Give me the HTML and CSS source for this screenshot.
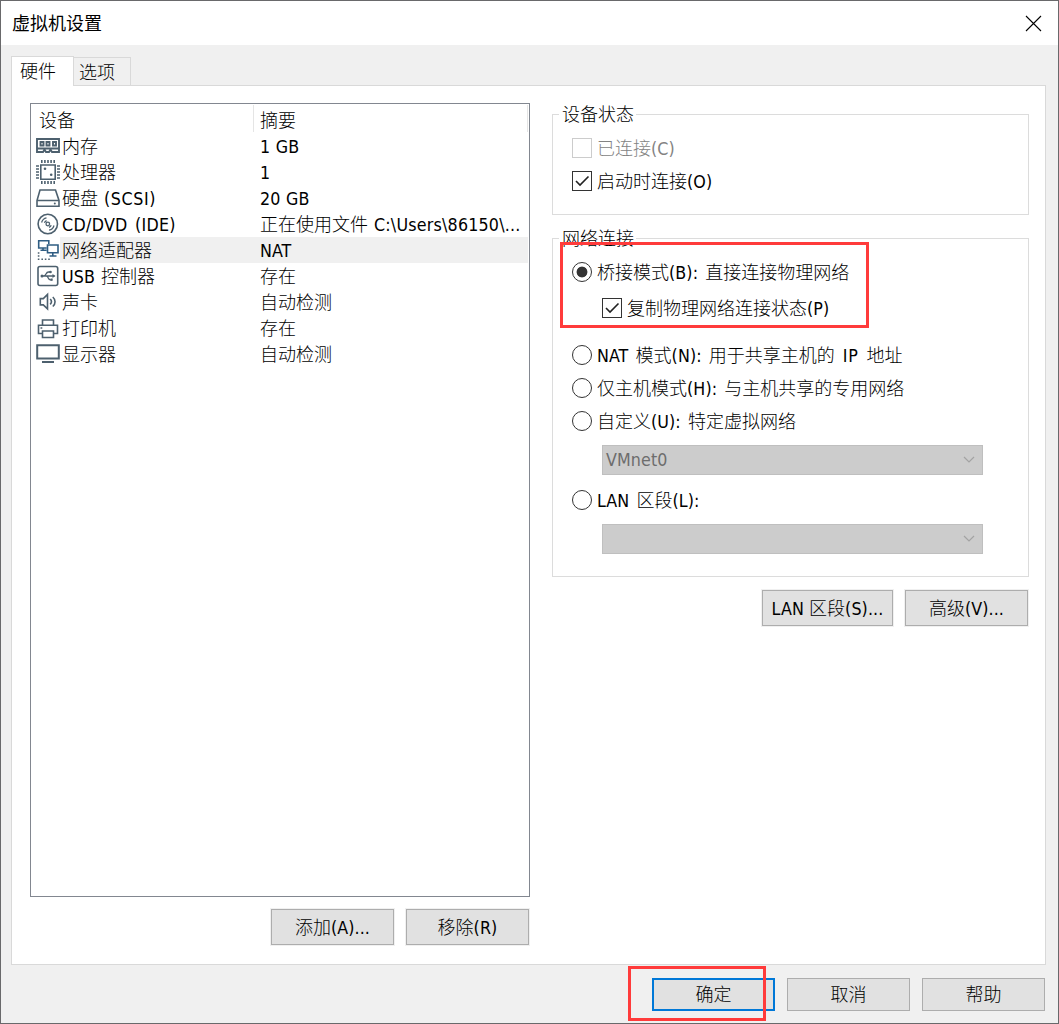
FILE: index.html
```html
<!DOCTYPE html>
<html lang="zh-CN">
<head>
<meta charset="utf-8">
<title>虚拟机设置</title>
<link rel="stylesheet" href="styles.css">
</head>
<body>
<div class="window">
  <header class="titlebar">
    <h1 class="title">虚拟机设置</h1>
    <svg class="close" width="17" height="17" viewBox="0 0 17 17"><path d="M1 1L16 16M16 1L1 16"/></svg>
  </header>
  <nav class="tabs">
    <div class="tab tab-active">硬件</div>
    <div class="tab">选项</div>
  </nav>
  <main class="panel">
    <section class="left">
      <div class="list">
        <div class="head"><span class="head-name">设备</span><span class="head-sum">摘要</span></div>
        <div class="row">
          <svg class="icon" viewBox="0 0 25 26"><path class="mem" d="M2 6H24V19H17L16 17.5H15L14 19H11L10 17.5H9L8 19H2ZM2 15.5H24M5.5 9H8.5V12.5H5.5ZM11.5 9H14.5V12.5H11.5ZM18 9H21V12.5H18Z"/></svg>
          <span class="name">内存</span><span class="sum"><i class="lt">1 GB</i></span>
        </div>
        <div class="row">
          <svg class="icon" viewBox="0 0 25 26"><path d="M5.8 6H20.2V20.2H5.8ZM6.8 1V4M9.9 1V4M13 1V4M16.1 1V4M19.2 1V4M6.8 22V25M9.9 22V25M13 22V25M16.1 22V25M19.2 22V25M1 7H4M1 10H4M1 13H4M1 16H4M1 19H4M22 7H25M22 10H25M22 13H25M22 16H25M22 19H25"/><circle class="fill" cx="10" cy="9.7" r="1.3"/><circle class="fill" cx="16.2" cy="15.8" r="1.3"/></svg>
          <span class="name">处理器</span><span class="sum"><i class="lt">1</i></span>
        </div>
        <div class="row">
          <svg class="icon" viewBox="0 0 25 26"><path d="M5 5H20.5L24 15.5V21.3H2V15.5ZM2 15.5H24"/><circle class="fill" cx="19.8" cy="18.5" r="1"/></svg>
          <span class="name">硬盘 <i class="lt scsi">(SCSI)</i></span><span class="sum"><i class="lt">20 GB</i></span>
        </div>
        <div class="row">
          <svg class="icon" viewBox="0 0 25 26"><circle cx="12.8" cy="13" r="9.7"/><circle class="thin" cx="12.8" cy="13" r="1.8"/><path class="thin" d="M6.6 11.5C7.3 9 9.2 7.2 11.5 6.8M9.4 11.8C9.8 10.8 10.6 10 11.6 9.6M19 14.5C18.3 17 16.4 18.8 14.1 19.2M16.2 14.2C15.8 15.2 15 16 14 16.4"/></svg>
          <span class="name"><i class="lt cd">CD/DVD (IDE)</i></span><span class="sum">正在使用文件 <i class="lt path">C:\Users\86150\...</i></span>
        </div>
        <div class="row row-selected">
          <svg class="icon icon-net" viewBox="0 0 25 26"><path d="M11.5 11H3.7V3.7H13.8V7M5.5 13.2H11.5M8 11V13M12.5 8H23V15.8H12.5ZM17.8 16V18.5M14.5 19H21.5"/><path class="dots" d="M2.8 16H4.4M2.8 19H4.4M2.8 22.3H4.4M6.4 22.3H8M9.8 22.3H11.4M13.2 22.3H14.8"/></svg>
          <span class="name">网络适配器</span><span class="sum"><i class="lt">NAT</i></span>
        </div>
        <div class="row">
          <svg class="icon" viewBox="0 0 25 26"><rect x="3" y="3.5" width="19.7" height="19" rx="2"/><path class="thin" d="M6.5 13H19.5M8.5 13C11.5 13 10.5 9 13.5 9H15M11 13C14 13 12.5 16.8 15.5 16.8H17"/><circle class="fill" cx="7" cy="13" r="1.5"/><circle class="fill" cx="15.5" cy="9" r="1.3"/><path class="fill" d="M17.5 11L20.5 13L17.5 15ZM15.5 15.6H17.7V17.8H15.5Z"/></svg>
          <span class="name"><i class="lt">USB</i> 控制器</span><span class="sum">存在</span>
        </div>
        <div class="row">
          <svg class="icon" viewBox="0 0 25 26"><path d="M5.3 9.6H8.3L12.5 5.5V19.8L8.3 15.9H5.3ZM15.2 10C16.7 11.6 16.7 13.8 15.2 15.4M17.8 8C20.8 10.7 20.8 14.8 17.8 17.5"/></svg>
          <span class="name">声卡</span><span class="sum">自动检测</span>
        </div>
        <div class="row">
          <svg class="icon" viewBox="0 0 25 26"><path d="M7.5 10V5H18.5V10M7.5 18.5H3.5V10.2H22.5V18.5H18.5M7.5 16H18.5V22.5H7.5ZM5.5 13H7.3"/></svg>
          <span class="name">打印机</span><span class="sum">存在</span>
        </div>
        <div class="row">
          <svg class="icon" viewBox="0 0 25 26"><path class="thick" d="M2.2 4.2H23.8V17.5H2.2Z"/><path class="thick" d="M7 21H19"/></svg>
          <span class="name">显示器</span><span class="sum">自动检测</span>
        </div>
      </div>
      <div class="actions">
        <button class="btn">添加<i class="lt">(A)...</i></button>
        <button class="btn">移除<i class="lt">(R)</i></button>
      </div>
    </section>
    <section class="right">
      <fieldset class="group status">
        <legend>设备状态</legend>
        <div class="opt disabled"><span class="box"></span><span class="label">已连接<i class="lt">(C)</i></span></div>
        <div class="opt"><span class="box"><svg viewBox="0 0 18 18"><path d="M3 9L7 13L15.5 4.5"/></svg></span><span class="label">启动时连接<i class="lt">(O)</i></span></div>
      </fieldset>
      <fieldset class="group network">
        <legend>网络连接</legend>
        <div class="opt"><span class="radio radio-on"></span><span class="label">桥接模式<i class="lt">(B): </i>直接连接物理网络</span></div>
        <div class="opt sub"><span class="box"><svg viewBox="0 0 18 18"><path d="M3 9L7 13L15.5 4.5"/></svg></span><span class="label">复制物理网络连接状态<i class="lt">(P)</i></span></div>
        <div class="opt nat"><span class="radio"></span><span class="label"><i class="lt">NAT </i>模式<i class="lt">(N): </i>用于共享主机的<i class="lt ip"> IP </i>地址</span></div>
        <div class="opt"><span class="radio"></span><span class="label">仅主机模式<i class="lt">(H): </i>与主机共享的专用网络</span></div>
        <div class="opt"><span class="radio"></span><span class="label">自定义<i class="lt">(U): </i>特定虚拟网络</span></div>
        <div class="combo"><i class="lt">VMnet0</i><svg width="12" height="8" viewBox="0 0 12 8"><path d="M1 1L6 6L11 1"/></svg></div>
        <div class="opt lan"><span class="radio"></span><span class="label"><i class="lt">LAN </i>区段<i class="lt">(L):</i></span></div>
        <div class="combo combo-lan"><svg width="12" height="8" viewBox="0 0 12 8"><path d="M1 1L6 6L11 1"/></svg></div>
      </fieldset>
      <div class="actions actions-right">
        <button class="btn btn-wide"><i class="lt">LAN </i>区段<i class="lt">(S)...</i></button>
        <button class="btn">高级<i class="lt">(V)...</i></button>
      </div>
    </section>
  </main>
  <footer class="footer">
    <button class="btn btn-default">确定</button>
    <button class="btn">取消</button>
    <button class="btn">帮助</button>
  </footer>
  <div class="mark mark-bridge"></div>
  <div class="mark mark-ok"></div>
</div>
</body>
</html>
```
FILE: styles.css
```css
* { box-sizing: border-box; }
body {
  margin: 0;
  font: 300 18px/26px "Noto Sans CJK SC", sans-serif;
  word-spacing: 2px;
  color: #000;
}
.window {
  position: relative;
  width: 1059px;
  height: 1024px;
  border: 1px solid #69696b;
  background: #f0f0f0;
  overflow: hidden;
}
.lt {
  font-family: "DejaVu Sans Condensed", "DejaVu Sans", sans-serif;
  font-stretch: condensed;
  font-style: normal;
  font-weight: 400;
  font-size: 17.7px;
  line-height: 20px;
  letter-spacing: 0.1px;
  white-space: pre;
}
.scsi { letter-spacing: 0.6px; }
.cd { letter-spacing: 0.3px; }
.path { letter-spacing: 0.2px; }
.ip { letter-spacing: 0.8px; }
.titlebar {
  display: flex;
  align-items: center;
  justify-content: space-between;
  height: 44px;
  padding: 0 16px 0 11px;
  background: #fff;
}
.title { margin: -3px 0 0; font-size: 18px; font-weight: 400; }
.close { fill: none; stroke: #000; stroke-width: 1.1; }
.tabs {
  display: flex;
  align-items: flex-end;
  height: 40px;
  padding: 11px 0 0 10px;
}
.tab {
  width: 57px;
  height: 28px;
  padding-left: 5px;
  border: 1px solid #d9d9d9;
  border-width: 1px 1px 0 0;
}
.tab-active {
  z-index: 1;
  width: 63px;
  height: 30px;
  margin-bottom: -1px;
  padding-left: 8px;
  border-left-width: 1px;
  background: #fff;
}
.panel {
  display: flex;
  gap: 22px;
  width: 1035px;
  height: 880px;
  margin-left: 10px;
  padding: 17px 16px 0 18px;
  border: 1px solid #d9d9d9;
  background: #fff;
}
.left { width: 500px; }
.list {
  height: 794px;
  border: 1px solid #828790;
}
.head {
  display: flex;
  height: 29px;
  padding-top: 1px;
}
.head-name {
  width: 223px;
  height: 27px;
  padding-left: 8px;
  line-height: 28px;
  border-right: 1px solid #e5e5e5;
}
.head-sum {
  width: 274px;
  height: 27px;
  padding-left: 6px;
  line-height: 28px;
  border-right: 1px solid #e5e5e5;
}
.row { display: flex; height: 26px; padding-left: 4px; line-height: 24px; }
.icon {
  width: 25px;
  height: 26px;
  fill: none;
  stroke: #4d606e;
  stroke-width: 1.6;
}
.icon .fill { fill: #4d606e; stroke: none; }
.icon .thin { stroke-width: 1.3; }
.icon .mem { stroke-width: 1.9; }
.icon .thick { stroke-width: 2; }
.icon-net { stroke: #2f5d83; }
.icon-net .dots { stroke: #4d606e; }
.name { width: 194px; padding-left: 2px; white-space: pre; }
.sum { width: 274px; padding-left: 6px; white-space: pre; }
.sum .lt { word-spacing: 0.5px; }
.row-selected .name, .row-selected .sum { background: #f0f0f0; }
.actions {
  display: flex;
  justify-content: flex-end;
  gap: 12px;
  padding: 12px 1px 0 0;
}
.btn {
  width: 123px;
  height: 36px;
  padding: 0 0 2px;
  border: 1px solid #adadad;
  background: #e1e1e1;
  box-shadow: 0 0 0 1px #f0f0f0;
  font: inherit;
  color: #000;
  white-space: pre;
}
.btn-wide { width: 131px; }
.right { width: 477px; }
.group {
  min-width: 0;
  margin: 0;
  padding: 0 0 0 19px;
  border: 1px solid #dcdcdc;
}
.group legend {
  height: 22px;
  margin-left: -13px;
  padding: 0 2px 0 3px;
  line-height: 20px;
}
.status { height: 112px; }
.network { height: 350px; margin-top: 12px; }
.opt {
  display: flex;
  align-items: center;
  height: 20px;
  margin-bottom: 13px;
  white-space: pre;
}
.label { margin-top: -3px; }
.status .opt:nth-of-type(1) { margin-top: 13px; }
.network .opt:nth-of-type(1) { margin: 13px 0 16px; }
.disabled { color: #838383; }
.box, .radio {
  flex: none;
  width: 20px;
  height: 20px;
  margin-right: 5px;
  border: 1px solid #333;
}
.box svg { display: block; fill: none; stroke: #222; stroke-width: 1.6; }
.disabled .box { border-color: #ccc; }
.radio { border-radius: 50%; }
.radio-on { background: radial-gradient(circle, #333 5px, #fff 5.8px); }
.sub { margin-left: 30px; }
.network .nat { margin-top: 27px; }
.combo {
  display: flex;
  align-items: center;
  justify-content: space-between;
  width: 381px;
  height: 30px;
  margin: 14px 0 15px 30px;
  padding: 0 7px 0 3px;
  border: 1px solid #bfbfbf;
  background: #ccc;
  color: #6d6d6d;
}
.combo svg { fill: none; stroke: #a3a3a3; stroke-width: 1.2; }
.combo-lan { justify-content: flex-end; }
.actions-right { padding-top: 13px; }
.footer {
  display: flex;
  justify-content: flex-end;
  gap: 12px;
  padding: 13px 13px 0 0;
}
.footer .btn { height: 33px; padding-bottom: 4px; box-shadow: none; }
.footer .btn-default { padding-bottom: 3px; border: 2px solid #0078d7; }
.mark { position: absolute; border: 3px solid #ff3b3b; }
.mark-bridge { left: 559px; top: 241px; width: 309px; height: 86px; }
.mark-ok { left: 627px; top: 965px; width: 138px; height: 55px; }
```
